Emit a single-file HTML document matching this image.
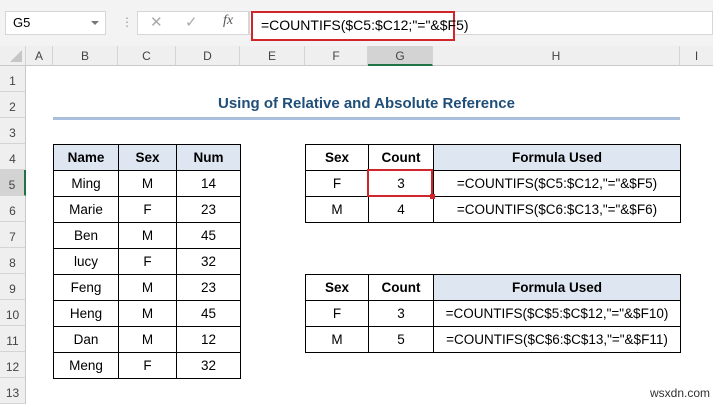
<!DOCTYPE html>
<html><head><style>
body{margin:0;width:713px;height:406px;overflow:hidden;background:#fff;font-family:"Liberation Sans",Arial,sans-serif;position:relative}
.a{position:absolute;box-sizing:border-box}
.ch{position:absolute;top:46px;height:20px;font-size:12px;color:#444;text-align:center;line-height:20px;border-right:1px solid #d4d4d4;box-sizing:border-box;background:#efefef;border-bottom:1px solid #c8c8c8}
.rh{position:absolute;left:0;width:26px;height:26px;font-size:12px;color:#444;text-align:center;line-height:30px;background:#efefef;border-bottom:1px solid #d4d4d4;border-right:1px solid #c8c8c8;box-sizing:border-box}
table{position:absolute;border-collapse:collapse;font-size:13.5px;color:#000;table-layout:fixed}
td{border:1px solid #000;height:26px;padding:0;text-align:center;box-sizing:border-box}
th{border:1px solid #000;height:26px;padding:0;text-align:center;font-weight:bold;box-sizing:border-box}
.f{background:#dde6f1}
</style></head><body>
<div class="a" style="left:0;top:0;width:713px;height:46px;background:#f3f3f3"></div>
<div class="a" style="left:5px;top:11px;width:101px;height:24px;background:#fff;border:1px solid #d6d6d6;font-size:13px;line-height:22px;padding-left:7px">G5</div>
<div class="a" style="left:91px;top:21px;width:0;height:0;border-left:4px solid transparent;border-right:4px solid transparent;border-top:4px solid #777"></div>
<div class="a" style="left:121px;top:15px;color:#999;font-size:12px">⋮</div>
<div class="a" style="left:137px;top:11px;width:112px;height:24px;background:#fff;border:1px solid #d6d6d6"></div>
<div class="a" style="left:150px;top:13px;color:#aaa;font-size:15px">✕</div>
<div class="a" style="left:185px;top:13px;color:#aaa;font-size:15px">✓</div>
<div class="a" style="left:223px;top:13px;color:#555;font-size:14px;font-style:italic;font-family:'Liberation Serif',serif">fx</div>
<div class="a" style="left:249px;top:11px;width:464px;height:24px;background:#fff;border:1px solid #d6d6d6"></div>
<div class="a" style="left:251px;top:11px;width:204px;height:30px;border:2px solid #d0262b;font-size:14px;line-height:25px;padding-left:8px;background:#fff">=COUNTIFS($C5:$C12;"="&amp;$F5)</div>

<div class="ch" style="left:0;width:26px"><span style="position:absolute;right:3px;bottom:3px;width:0;height:0;border-left:12px solid transparent;border-bottom:12px solid #c6c6c6"></span></div>
<div class="ch" style="left:26px;width:27px">A</div>
<div class="ch" style="left:53px;width:65px">B</div>
<div class="ch" style="left:118px;width:58px">C</div>
<div class="ch" style="left:176px;width:64px">D</div>
<div class="ch" style="left:240px;width:65px">E</div>
<div class="ch" style="left:305px;width:63px">F</div>
<div class="ch" style="left:368px;width:65px;background:#d3d3d3;border-bottom:2px solid #217346">G</div>
<div class="ch" style="left:433px;width:247px">H</div>
<div class="ch" style="left:680px;width:33px;border-right:none">I</div>

<div class="rh" style="top:66px">1</div>
<div class="rh" style="top:92px">2</div>
<div class="rh" style="top:118px">3</div>
<div class="rh" style="top:144px">4</div>
<div class="rh" style="top:170px;background:#d3d3d3;border-right:2px solid #217346">5</div>
<div class="rh" style="top:196px">6</div>
<div class="rh" style="top:222px">7</div>
<div class="rh" style="top:248px">8</div>
<div class="rh" style="top:274px">9</div>
<div class="rh" style="top:300px">10</div>
<div class="rh" style="top:326px">11</div>
<div class="rh" style="top:352px">12</div>
<div class="rh" style="top:378px">13</div>

<div class="a" style="left:53px;top:95px;width:627px;text-align:center;font-weight:bold;font-size:15px;color:#1f4e79">Using of Relative and Absolute Reference</div>
<div class="a" style="left:53px;top:117px;width:627px;height:3px;background:#a9bfdc"></div>

<table style="left:53px;top:144px;width:188px">
<col style="width:65px"><col style="width:58px"><col style="width:64px">
<tr><th class="f">Name</th><th class="f">Sex</th><th class="f">Num</th></tr>
<tr><td>Ming</td><td>M</td><td>14</td></tr>
<tr><td>Marie</td><td>F</td><td>23</td></tr>
<tr><td>Ben</td><td>M</td><td>45</td></tr>
<tr><td>lucy</td><td>F</td><td>32</td></tr>
<tr><td>Feng</td><td>M</td><td>23</td></tr>
<tr><td>Heng</td><td>M</td><td>45</td></tr>
<tr><td>Dan</td><td>M</td><td>12</td></tr>
<tr><td>Meng</td><td>F</td><td>32</td></tr>
</table>

<table style="left:305px;top:144px;width:376px">
<col style="width:63px"><col style="width:65px"><col style="width:247px">
<tr><th>Sex</th><th>Count</th><th class="f">Formula Used</th></tr>
<tr><td>F</td><td>3</td><td>=COUNTIFS($C5:$C12,"="&amp;$F5)</td></tr>
<tr><td>M</td><td>4</td><td>=COUNTIFS($C6:$C13,"="&amp;$F6)</td></tr>
</table>
<div class="a" style="left:367px;top:169px;width:66px;height:28px;border:2px solid #d0262b"></div>
<div class="a" style="left:430px;top:194px;width:5px;height:5px;background:#d0262b"></div>

<table style="left:305px;top:274px;width:376px">
<col style="width:63px"><col style="width:65px"><col style="width:247px">
<tr><th>Sex</th><th>Count</th><th class="f">Formula Used</th></tr>
<tr><td>F</td><td>3</td><td>=COUNTIFS($C$5:$C$12,"="&amp;$F10)</td></tr>
<tr><td>M</td><td>5</td><td>=COUNTIFS($C$6:$C$13,"="&amp;$F11)</td></tr>
</table>

<div class="a" style="left:650px;top:386px;font-size:12px;color:#333">wsxdn.com</div>
</body></html>
